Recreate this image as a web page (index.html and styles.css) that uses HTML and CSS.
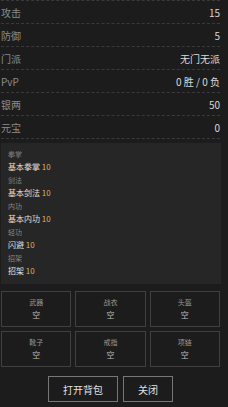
FILE: index.html
```html
<!DOCTYPE html>
<html lang="zh">
<head>
    <meta charset="UTF-8">
    <meta name="viewport" content="width=device-width, initial-scale=1.0">
    <title>角色</title>
    <link rel="stylesheet" href="styles.css">
</head>
<body>
    <div class="page">
        <div class="stats">
            <div class="stat-row"><span class="stat-label">攻击</span><span class="stat-value">15</span></div>
            <div class="stat-row"><span class="stat-label">防御</span><span class="stat-value">5</span></div>
            <div class="stat-row"><span class="stat-label">门派</span><span class="stat-value">无门无派</span></div>
            <div class="stat-row"><span class="stat-label">PvP</span><span class="stat-value">0 胜 / 0 负</span></div>
            <div class="stat-row"><span class="stat-label">银两</span><span class="stat-value">50</span></div>
            <div class="stat-row"><span class="stat-label">元宝</span><span class="stat-value">0</span></div>
        </div>

        <div class="skills">
            <div class="skill-type">拳掌</div>
            <div class="skill-name">基本拳掌 <span class="lvl">10</span></div>
            <div class="skill-type">剑法</div>
            <div class="skill-name">基本剑法 <span class="lvl">10</span></div>
            <div class="skill-type">内功</div>
            <div class="skill-name">基本内功 <span class="lvl">10</span></div>
            <div class="skill-type">轻功</div>
            <div class="skill-name">闪避 <span class="lvl">10</span></div>
            <div class="skill-type">招架</div>
            <div class="skill-name">招架 <span class="lvl">10</span></div>
        </div>

        <div class="equip">
            <div class="slot"><div class="slot-name">武器</div><div class="slot-item">空</div></div>
            <div class="slot"><div class="slot-name">战衣</div><div class="slot-item">空</div></div>
            <div class="slot"><div class="slot-name">头盔</div><div class="slot-item">空</div></div>
            <div class="slot"><div class="slot-name">靴子</div><div class="slot-item">空</div></div>
            <div class="slot"><div class="slot-name">戒指</div><div class="slot-item">空</div></div>
            <div class="slot"><div class="slot-name">项链</div><div class="slot-item">空</div></div>
        </div>

        <div class="actions">
            <button class="btn">打开背包</button>
            <button class="btn">关闭</button>
        </div>
    </div>
</body>
</html>
```

FILE: styles.css
```css
body {
    margin: 0;
    background-color: #1c1c1c;
    font-family: "Noto Sans CJK SC", "Noto Sans", sans-serif;
    overflow: hidden;
}

.page {
    width: 219px;
    margin-left: 1px;
}

.stats {
    border-top: 1px dashed #3a3a3a;
}

.stat-row {
    display: flex;
    justify-content: space-between;
    align-items: center;
    height: 22px;
    border-bottom: 1px dashed #3a3a3a;
    font-size: 10px;
}

.stat-label {
    color: #8c8c8c;
}

.stat-value {
    color: #dadada;
}

.skills {
    margin-top: 4px;
    margin-right: -1px;
    background-color: #262626;
    padding: 6px 7px 5px;
}

.skill-type {
    font-size: 7px;
    line-height: 11px;
    color: #858585;
}

.skill-name {
    font-size: 8px;
    line-height: 13px;
    margin-bottom: 2px;
    color: #e0e0e0;
}

.lvl {
    color: #d6b45c;
}

.equip {
    display: grid;
    grid-template-columns: repeat(3, 1fr);
    gap: 4px;
    margin-top: 7px;
}

.slot {
    border: 1px solid #404040;
    padding: 5px 0 4px;
    text-align: center;
}

.slot-name {
    font-size: 7px;
    line-height: 11px;
    color: #999;
}

.slot-item {
    font-size: 8px;
    line-height: 14px;
    color: #bbb;
}

.actions {
    display: flex;
    justify-content: center;
    gap: 5px;
    margin-top: 9px;
}

.btn {
    height: 26px;
    padding: 0 14px;
    background: transparent;
    border: 1px solid #777;
    color: #e0e0e0;
    font-family: "Noto Sans CJK SC", sans-serif;
    font-size: 10px;
}
```
